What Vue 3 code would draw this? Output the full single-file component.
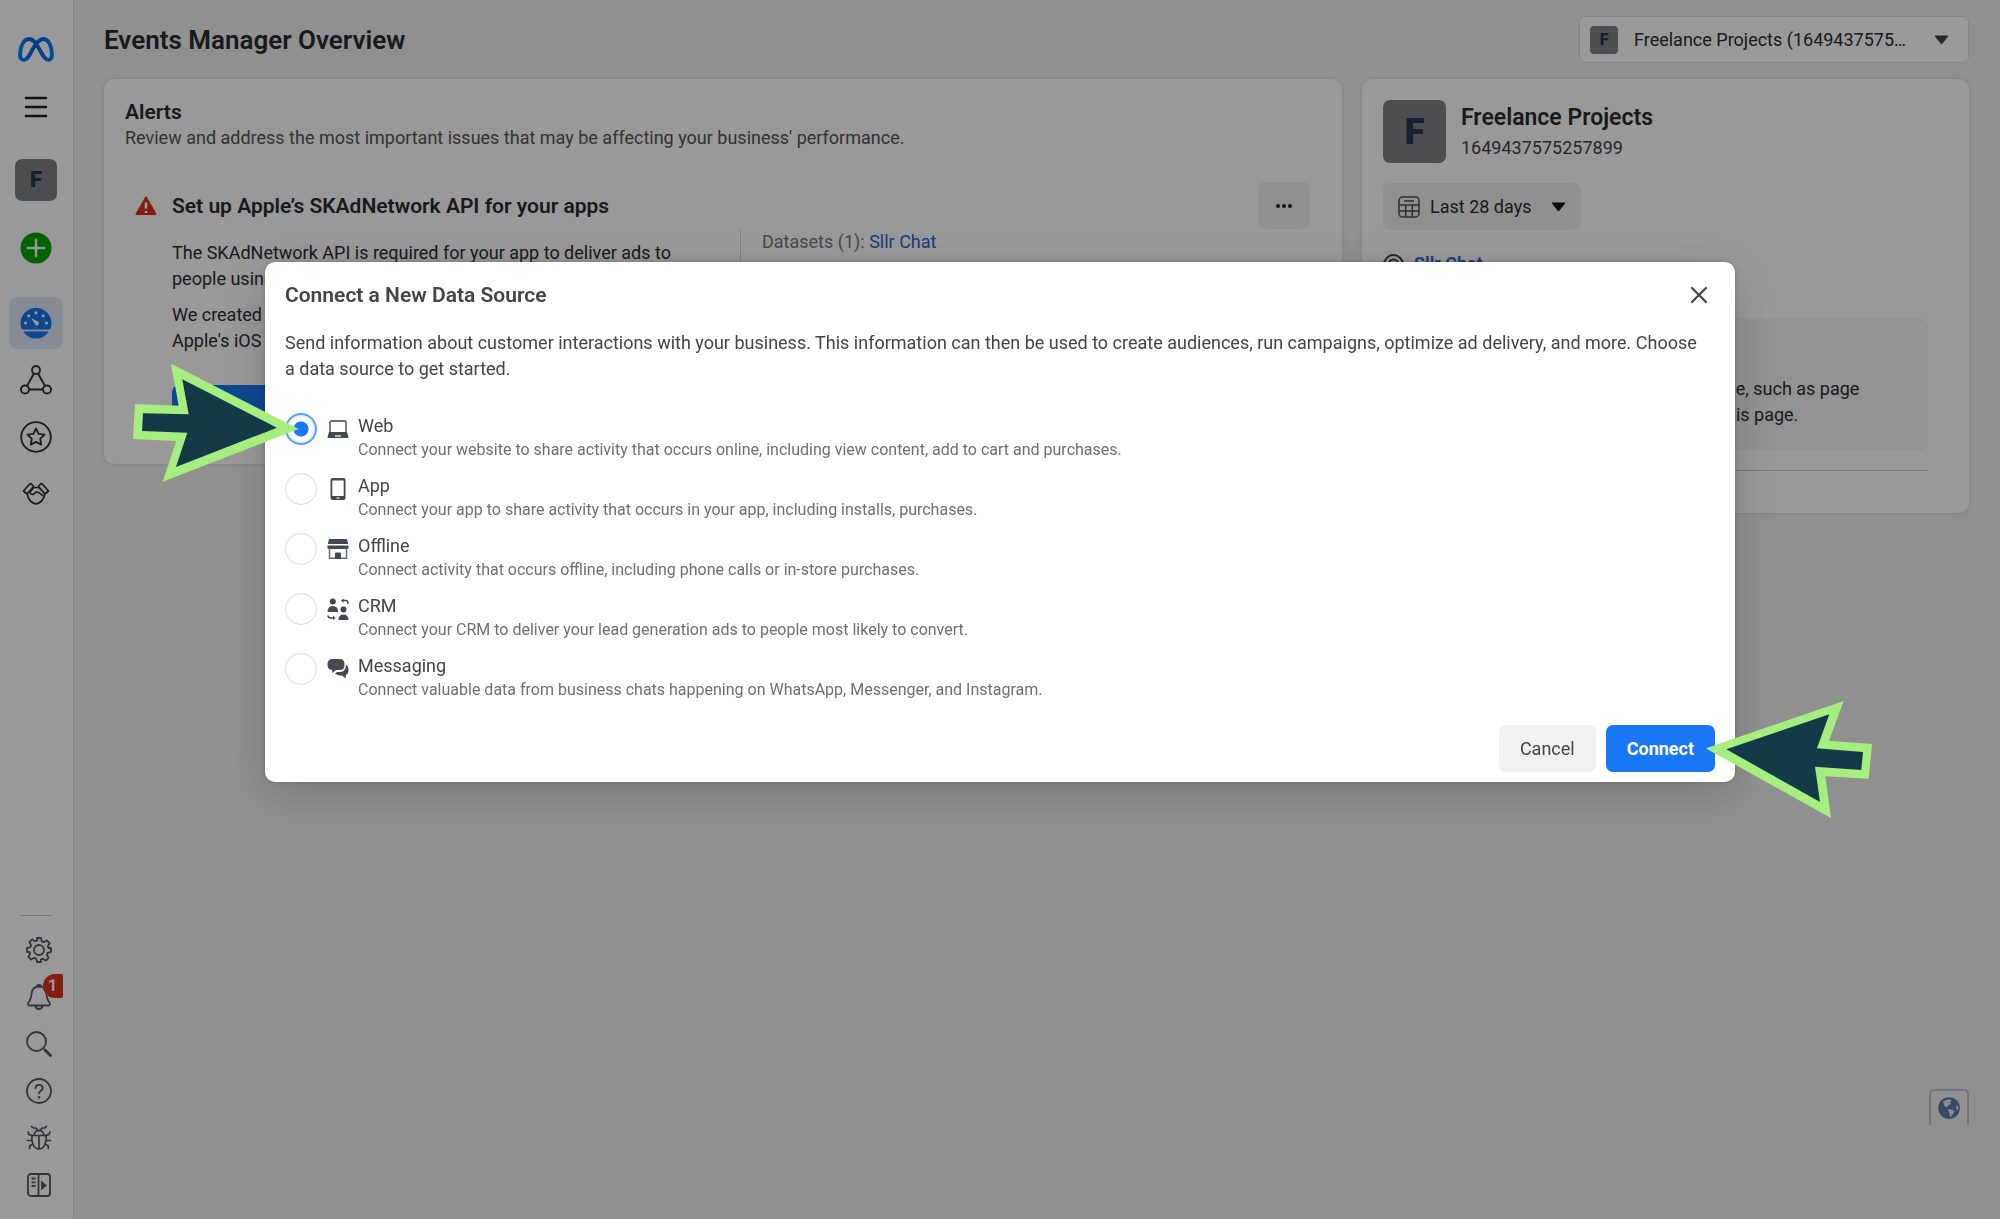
<script setup>
import { ref } from "vue";

const account = ref("1649437575257899");
const dateRange = ref("28");
const selected = ref("web");

const sources = [
  {
    id: "web",
    label: "Web",
    text: "Connect your website to share activity that occurs online, including view content, add to cart and purchases.",
  },
  {
    id: "app",
    label: "App",
    text: "Connect your app to share activity that occurs in your app, including installs, purchases.",
  },
  {
    id: "offline",
    label: "Offline",
    text: "Connect activity that occurs offline, including phone calls or in-store purchases.",
  },
  {
    id: "crm",
    label: "CRM",
    text: "Connect your CRM to deliver your lead generation ads to people most likely to convert.",
  },
  {
    id: "messaging",
    label: "Messaging",
    text: "Connect valuable data from business chats happening on WhatsApp, Messenger, and Instagram.",
  },
];
</script>

<template>
  <div class="page">
    <nav class="sidebar" aria-label="Main">
      <div class="side-top">
        <a href="#" class="logo" aria-label="Meta">
          <svg width="36" height="25" viewBox="0 0 36 25" fill="none">
            <defs>
              <linearGradient id="meta" x1="0" x2="1" y1="0" y2="0">
                <stop offset="0" stop-color="#0082fb" />
                <stop offset="0.45" stop-color="#0064e0" />
                <stop offset="1" stop-color="#0082fb" />
              </linearGradient>
            </defs>
            <path
              d="M2 18C2 10 5.500 2 10.800 2c4.500 0 7 4 10.700 10.500C25 18.700 27 22.800 30.200 22.800c2.600 0 3.800-2 3.800-5.300C34 9.500 30.500 2 25.300 2c-4 0-7 3.800-10.500 10C11 19 9.500 22.800 6 22.800 3.300 22.800 2 20.800 2 18z"
              stroke="url(#meta)"
              stroke-width="3.800"
            />
          </svg>
        </a>
        <button class="icon-btn menu" aria-label="Menu">
          <svg width="24" height="24" viewBox="0 0 24 24" stroke="#1c1e21" stroke-width="2.600" stroke-linecap="round">
            <path d="M2 3h20M2 12h20M2 21h20" />
          </svg>
        </button>
        <button class="avatar avatar-side">F</button>
        <button class="icon-btn plus" aria-label="Create">
          <svg width="32" height="32" viewBox="0 0 32 32">
            <circle cx="16" cy="16" r="15.500" fill="#00a400" />
            <path d="M16 8v16M8 16h16" stroke="#fff" stroke-width="2.400" stroke-linecap="round" />
          </svg>
        </button>
        <a href="#" class="side-link active" aria-label="Overview">
          <svg width="32" height="32" viewBox="0 0 32 32">
            <path d="M1.800 22.500a15.500 15.500 0 1 1 28.400 0z" fill="#1877f2" />
            <path d="M3 24.500h26a15.500 15.500 0 0 1-26 0z" fill="#1877f2" />
            <g fill="#fff">
              <circle cx="5.500" cy="16" r="1.600" />
              <circle cx="8.800" cy="8.800" r="1.600" />
              <circle cx="16" cy="5.800" r="1.600" />
              <circle cx="23.200" cy="8.800" r="1.600" />
              <circle cx="26.500" cy="16" r="1.600" />
              <path d="M11.300 11.300l7 3.500a2.200 2.200 0 0 1-2.700 3.400z" />
            </g>
          </svg>
        </a>
        <a href="#" class="side-link" aria-label="Data sources">
          <svg width="32" height="32" viewBox="0 0 32 32" fill="none" stroke="#2b2d31" stroke-width="1.800">
            <circle cx="16" cy="6" r="4" />
            <circle cx="5" cy="25.500" r="4" />
            <circle cx="27" cy="25.500" r="4" />
            <path d="M14 9.500L7 22M18 9.500L25 22M9 25.500h14" />
          </svg>
        </a>
        <a href="#" class="side-link" aria-label="Custom conversions">
          <svg width="32" height="32" viewBox="0 0 32 32" fill="none" stroke="#2b2d31" stroke-width="1.800" stroke-linejoin="round">
            <circle cx="16" cy="16" r="14.800" />
            <path d="M16 7.500l2.600 5.300 5.900.9-4.300 4.100 1 5.800-5.200-2.700-5.200 2.700 1-5.800-4.300-4.100 5.900-.9z" />
          </svg>
        </a>
        <a href="#" class="side-link" aria-label="Partner integrations">
          <svg width="28" height="24" viewBox="0 0 28 24" fill="none" stroke="#2b2d31" stroke-width="1.700" stroke-linejoin="round" stroke-linecap="round">
            <path d="M1.500 9L7.500 2.200q1-1 2 0l1.500 1.500q.8.800 0 1.700L5 12z" />
            <path d="M26.500 9l-6-6.800q-1-1-2 0L17 3.700q-.8.800 0 1.700L23 12z" />
            <path d="M11.500 5.500h5M5.500 12.500c.3 4 4 9.300 8.500 9.300s8.200-5.300 8.500-9.300" />
            <path d="M11 6.500c-2 1.500-3.500 3.500-2.500 5 1.500 2 4 .5 5.500-1.500 2.500 0 4.500 1 6.500 3.500" />
          </svg>
        </a>
      </div>

      <div class="side-bottom">
        <button class="icon-btn" aria-label="Settings">
          <svg width="26" height="26" viewBox="0 0 26 26" fill="none" stroke="#54585f" stroke-width="1.800" stroke-linejoin="round">
            <circle cx="13" cy="13" r="5" />
            <path d="M11 1h4l.8 3.400 2 .8 3-1.800 2.800 2.800-1.800 3 .8 2L25 11v4l-3.400.8-.8 2 1.800 3-2.800 2.800-3-1.800-2 .8L15 25h-4l-.8-3.400-2-.8-3 1.800-2.800-2.800 1.800-3-.8-2L1 15v-4l3.400-.8.8-2-1.800-3 2.800-2.800 3 1.800 2-.8z" />
          </svg>
        </button>
        <button class="icon-btn bell" aria-label="Notifications">
          <svg width="26" height="26" viewBox="0 0 26 26" fill="none" stroke="#54585f" stroke-width="1.800" stroke-linejoin="round">
            <path d="M13 2.500c-4.600 0-7 3-7.400 7-.4 4.500-1 6.500-3.100 9-1 1.500-.3 3 1.200 3h18.600c1.500 0 2.200-1.500 1.200-3-2.100-2.500-2.700-4.500-3.100-9-.4-4-2.800-7-7.400-7zM9.500 22c.3 2 1.800 3 3.500 3s3.200-1 3.500-3M10.500 2.500c1-2 4-2 5 0" />
          </svg>
          <span class="badge">1</span>
        </button>
        <button class="icon-btn" aria-label="Search">
          <svg width="26" height="26" viewBox="0 0 26 26" fill="none" stroke="#54585f" stroke-linecap="round">
            <circle cx="10.500" cy="10.500" r="9.500" stroke-width="1.800" />
            <path d="M17.500 17.500l2 2" stroke-width="1.800" />
            <path d="M19.500 19.500l5 5" stroke-width="2.800" />
          </svg>
        </button>
        <button class="icon-btn" aria-label="Help">
          <svg width="26" height="26" viewBox="0 0 26 26" fill="none" stroke="#54585f" stroke-width="1.800" stroke-linecap="round">
            <circle cx="13" cy="13" r="12" />
            <path d="M9.500 10.300c0-4.600 7.200-4.400 7.200-.3 0 2.700-3.700 2.600-3.700 5.300" />
            <circle cx="13" cy="19.300" r=".5" />
          </svg>
        </button>
        <button class="icon-btn" aria-label="Report a problem">
          <svg width="26" height="26" viewBox="0 0 26 26" fill="none" stroke="#54585f" stroke-width="1.700" stroke-linecap="round">
            <path d="M6 10.500h14c1 6-1.500 13.500-7 13.500S5 16.500 6 10.500zM8 10.500C8.500 3.800 17.500 3.800 18 10.500M13 10.500V24" />
            <path d="M5.500 1.500l2 1.500h2.500l2 2.500M20.500 1.500l-2 1.500H16l-2 2.500M2 7l1 2.500 3 1M24 7l-1 2.500-3 1M1.500 15.500h4M24.500 15.500h-4M3.500 23.500l.5-3 2.500-1M22.500 23.500l-.5-3-2.500-1" />
          </svg>
        </button>
        <button class="icon-btn" aria-label="Expand navigation">
          <svg width="26" height="26" viewBox="0 0 26 26" fill="none" stroke="#54585f" stroke-width="1.800">
            <rect x="2" y="2" width="22" height="22" rx="3" />
            <path d="M12.500 2v22M5.500 6.500h4M5.500 10.300h4M5.500 14h4" />
            <path d="M16 10.500l3.500 3-3.500 3z" fill="#54585f" />
          </svg>
        </button>
      </div>
    </nav>

    <main class="main">
      <header class="topbar">
        <h1>Events Manager Overview</h1>
        <label class="account-select">
          <span class="avatar avatar-small" aria-hidden="true">F</span>
          <select v-model="account" aria-label="Business account">
            <option value="1649437575257899">Freelance Projects (1649437575257899)</option>
          </select>
          <svg class="caret" width="15" height="10" viewBox="0 0 15 10">
            <path d="M1 1h13L7.500 9z" fill="#444" stroke="#444" stroke-linejoin="round" />
          </svg>
        </label>
      </header>

      <div class="columns">
        <section class="card alerts">
          <h2>Alerts</h2>
          <p class="sub">Review and address the most important issues that may be affecting your business' performance.</p>
          <div class="alert-head">
            <svg width="22" height="20" viewBox="0 0 22 20">
              <path d="M11 1.500L20.500 18h-19z" fill="#d8321a" stroke="#d8321a" stroke-width="2" stroke-linejoin="round" />
              <path d="M11 6.500v6M11 15v2" stroke="#fff" stroke-width="2.600" />
            </svg>
            <h3>Set up Apple’s SKAdNetwork API for your apps</h3>
            <button class="more" aria-label="More options">
              <svg width="18" height="6" viewBox="0 0 18 6" fill="#222">
                <circle cx="3" cy="3" r="2" />
                <circle cx="9" cy="3" r="2" />
                <circle cx="15" cy="3" r="2" />
              </svg>
            </button>
          </div>
          <div class="alert-body">
            <div class="alert-text">
              <p>The SKAdNetwork API is required for your app to deliver ads to people using devices on iOS 14 or later.</p>
              <p>We created a configuration for you based on<br />Apple's iOS 14 requirements.</p>
              <button class="primary">Get Started</button>
            </div>
            <div class="datasets">Datasets (1): <a href="#">Sllr Chat</a></div>
          </div>
        </section>

        <section class="card account">
          <div class="account-head">
            <span class="avatar avatar-large" aria-hidden="true">F</span>
            <div>
              <h2>Freelance Projects</h2>
              <p>1649437575257899</p>
            </div>
          </div>
          <label class="range-select">
            <svg width="22" height="22" viewBox="0 0 22 22" fill="none" stroke="#4a4f57" stroke-width="1.500">
              <rect x="1" y="1" width="20" height="20" rx="3.500" />
              <path d="M6 5h10M1 9h20M1 15h20M7.700 9v12M14.300 9v12" />
            </svg>
            <select v-model="dateRange" aria-label="Date range">
              <option value="28">Last 28 days</option>
            </select>
            <svg class="caret" width="15" height="10" viewBox="0 0 15 10">
              <path d="M1 1h13L7.500 9z" fill="#111" stroke="#111" stroke-linejoin="round" />
            </svg>
          </label>
          <div class="source-name">
            <svg width="21" height="21" viewBox="0 0 21 21" fill="none" stroke="#3a3f47" stroke-width="2">
              <circle cx="10.500" cy="10.500" r="9.400" />
              <circle cx="10.500" cy="10.500" r="5" />
            </svg>
            <a href="#">Sllr Chat</a>
          </div>
          <div class="notice">
            <p>website, such as page<br />visit this page.</p>
          </div>
          <hr />
        </section>
      </div>

      <button class="globe" aria-label="Language">
        <svg width="22" height="22" viewBox="0 0 22 22">
          <circle cx="11" cy="11" r="10.800" fill="#5f78b0" />
          <path d="M5 4.500l4-2 5 .5-2 2 1 2-2.500 1L9 10.500 6.500 9zM10 12l4 .5 2.500 2-2 3-2.500 3-.5-4zM19 8l1.500 2-1 3.500-1.500-2z" fill="#e4e8ee" />
        </svg>
      </button>
    </main>

    <div class="overlay">
      <div class="modal" role="dialog" aria-modal="true" aria-labelledby="modal-title">
        <div class="modal-head">
          <h2 id="modal-title">Connect a New Data Source</h2>
          <button class="close" aria-label="Close">
            <svg width="18" height="18" viewBox="0 0 18 18" stroke="#444" stroke-width="2.200" stroke-linecap="round">
              <path d="M2 2l14 14M16 2L2 16" />
            </svg>
          </button>
        </div>
        <p class="intro">
          Send information about customer interactions with your business. This information can then be used to create
          audiences, run campaigns, optimize ad delivery, and more. Choose a&nbsp;data source to get started.
        </p>

        <div class="options" role="radiogroup" aria-labelledby="modal-title">
          <label v-for="source in sources" :key="source.id" class="option">
            <input v-model="selected" type="radio" name="source" :value="source.id" />
            <svg class="source-icon" width="22" height="22" viewBox="0 0 22 22" fill="#444950">
              <template v-if="source.id === 'web'">
                <path d="M3 14V4.500A1.500 1.500 0 0 1 4.500 3h13A1.500 1.500 0 0 1 19 4.500V14" fill="none" stroke="#6a6e76" stroke-width="1.800" />
                <path d="M2 14h18l1.500 5q0 1-1 1h-19q-1 0-1-1z" />
                <path d="M8 18h6" stroke="#fff" stroke-width="1.200" />
              </template>
              <template v-else-if="source.id === 'app'">
                <path d="M5.500 0h11a2 2 0 0 1 2 2v18a2 2 0 0 1-2 2h-11a2 2 0 0 1-2-2V2a2 2 0 0 1 2-2z" />
                <path d="M5.300 2.500h11.400v15.500H5.300z" fill="#fff" />
                <path d="M9.500 20h3" stroke="#fff" stroke-width="1" />
              </template>
              <template v-else-if="source.id === 'offline'">
                <path d="M3 1h16q1 0 1.200 1l1 4H.8l1-4Q2 1 3 1zM.5 7.500h21V10q0 1-1.200 1H1.700Q.5 11 .5 10z" />
                <path d="M2.500 10v10.300h17V10" fill="none" stroke="#6a6e76" stroke-width="1.500" />
                <path d="M8 21v-5.500q0-1 1-1h4q1 0 1 1V21z" />
              </template>
              <template v-else-if="source.id === 'crm'">
                <circle cx="5.800" cy="3.600" r="3" />
                <path d="M.5 14q0-6 5.300-6t5.300 6zM11.500 22q0-5.500 5-5.500t5 5.500z" />
                <circle cx="16.500" cy="11.500" r="3" />
                <path d="M15 2.500h4q2 0 2 3.500M1 17.500q0 2.500 3 2.500h3" fill="none" stroke="#444950" stroke-width="1.500" />
                <path d="M16.500.5v4.500L14 2.500zM6 17.500V22l2.500-2z" />
              </template>
              <template v-else>
                <path d="M5 1h8q4.500 0 4.500 5.500T13 12H9l-3.500 3-.5-3Q.5 11.500.5 6.500T5 1z" />
                <path d="M19 7q2.500 1 2.500 5t-2.500 5l-.5 3.500L15 17.500q-4.500.5-7-2l2-1.500h3q5.500 0 6-7z" />
              </template>
            </svg>
            <span class="option-text">
              <span class="option-label">{{ source.label }}</span>
              <span class="option-desc">{{ source.text }}</span>
            </span>
            <svg v-if="source.id === 'web'" class="arrow arrow-left" width="166" height="118" viewBox="133 364 166 118">
              <path d="M298.700 429L171 363.700l7.700 42L135 404l-2 35 43.300 2-13.600 40.700z" fill="#a5ee7f" />
              <path d="M277 427.700l-94.700-48.400 6.400 35-45.700-1-1 17.700 45.300 1.700L176 467z" fill="#143a48" />
            </svg>
          </label>
        </div>

        <div class="modal-foot">
          <button class="cancel">Cancel</button>
          <button class="connect">
            Connect
            <svg class="arrow arrow-right" width="166" height="117" viewBox="1706 701 166 117">
              <path d="M1705.700 748.300L1843.700 701 1829 740.700l43 3.300-3.300 34.700-43.400-2.400 5.700 41.700z" fill="#a5ee7f" />
              <path d="M1726.300 749.300l103-35-12.300 34 46 3.700-1.700 18-46.300-3.300 5 35.300z" fill="#143a48" />
            </svg>
          </button>
        </div>
      </div>
    </div>
  </div>
</template>

<style>
body {
  margin: 0;
}
</style>

<style scoped>
.page {
  display: flex;
  min-height: 100vh;
  background: #f1f1f1;
  color: #2a2c30;
  font-family: Roboto, "Liberation Sans", sans-serif;
  font-size: 18px;
  line-height: 26px;
}

.page *,
.page {
  box-sizing: border-box;
}

h1,
h2,
h3,
p {
  margin: 0;
}

h1,
h2,
h3 {
  font-weight: 600;
}

button,
select {
  font: inherit;
  color: inherit;
}

button {
  padding: 0;
  border: none;
  background: none;
  cursor: pointer;
}

svg {
  display: block;
  flex: none;
}

a {
  color: #2f62cf;
  text-decoration: none;
}

/* sidebar */
.sidebar {
  display: flex;
  flex-direction: column;
  justify-content: space-between;
  flex: none;
  width: 74px;
  padding: 37px 1px 21px 0;
  background: #fff;
  border-right: 1px solid #e0e0e0;
}

.side-top {
  display: flex;
  flex-direction: column;
  align-items: center;
}

.menu {
  margin-top: 33px;
}

.avatar {
  display: flex;
  align-items: center;
  justify-content: center;
  flex: none;
  background: #808386;
  color: #28344c;
  font-weight: 900;
}

.avatar-side {
  width: 42px;
  height: 42px;
  margin: 40px 0 31px;
  border-radius: 7px;
  font-size: 22px;
}

.plus {
  margin-bottom: 33px;
}

.side-link {
  display: flex;
  align-items: center;
  justify-content: center;
  width: 52px;
  height: 52px;
  margin-bottom: 5px;
  border-radius: 6px;
}

.active {
  background: #e1eaf7;
}

.side-bottom {
  display: flex;
  flex-direction: column;
  align-items: center;
  gap: 21px;
  margin: 0 20px;
  padding-top: 21px;
  border-top: 1px solid #ccc;
}

.side-bottom .icon-btn {
  position: relative;
  margin-left: 5px;
}

.badge {
  position: absolute;
  top: -10px;
  left: 17px;
  width: 20px;
  height: 24px;
  border-radius: 12px 2px 2px 12px;
  background: #d8321a;
  color: #fff;
  font-size: 16px;
  font-weight: 700;
  line-height: 24px;
}

/* content */
.main {
  display: flex;
  flex-direction: column;
  flex: 1;
  min-width: 0;
  padding: 16px 31px 94px 30px;
}

.topbar {
  display: flex;
  align-items: center;
  justify-content: space-between;
  margin-bottom: 16px;
}

h1 {
  font-size: 26px;
}

.account-select {
  display: flex;
  align-items: center;
  width: 390px;
  height: 47px;
  padding: 0 19px 0 10px;
  border: 1px solid #ddd;
  border-radius: 6px;
  background: #fff;
}

select {
  appearance: none;
  border: none;
  background: transparent;
  padding: 0;
  text-overflow: ellipsis;
}

.account-select select {
  flex: 1;
  min-width: 0;
  margin: 0 25px 0 16px;
}

.avatar-small {
  width: 28px;
  height: 28px;
  border-radius: 4px;
  font-size: 16px;
}

.columns {
  display: flex;
  align-items: flex-start;
  gap: 20px;
}

.card {
  border-radius: 10px;
  background: #fff;
  box-shadow: 0 0 4px rgba(0, 0, 0, 0.16);
}

.alerts {
  flex: 1;
  min-width: 0;
  padding: 20px 32px 32px 21px;
}

.alerts h2,
.alerts h3 {
  font-size: 21px;
}

.sub {
  color: #555;
}

.alert-head {
  display: flex;
  align-items: center;
  margin-top: 31px;
  padding-left: 10px;
}

.alert-head h3 {
  flex: 1;
  margin-left: 15px;
}

.more {
  display: flex;
  align-items: center;
  justify-content: center;
  width: 52px;
  height: 47px;
  border-radius: 7px;
  background: #f1f1f1;
}

.alert-body {
  display: flex;
  align-items: stretch;
  padding-left: 47px;
}

.alert-text {
  width: 568px;
  padding: 11px 50px 0 0;
}

.alert-text p {
  margin-bottom: 10px;
}

.primary {
  width: 300px;
  height: 47px;
  margin-top: 21px;
  border-radius: 7px;
  background: #1877f2;
  color: #fff;
  font-weight: 600;
}

.datasets {
  padding: 0 21px;
  border-left: 1px solid #d5d5d5;
  color: #75777b;
}

.account {
  width: 607px;
  padding: 21px 41px 42px 21px;
}

.account-head {
  display: flex;
  gap: 15px;
}

.account-head h2 {
  margin-top: 5px;
  font-size: 23px;
}

.account-head p {
  margin-top: 4px;
  color: #444;
}

.avatar-large {
  width: 63px;
  height: 63px;
  border-radius: 7px;
  font-size: 36px;
}

.range-select {
  display: inline-flex;
  align-items: center;
  height: 47px;
  margin-top: 20px;
  padding: 0 15px;
  border-radius: 7px;
  background: #f1f1f1;
}

.range-select select {
  width: 103px;
  margin: 0 18px 0 10px;
}

.source-name {
  display: flex;
  align-items: center;
  gap: 10px;
  margin-top: 21px;
  font-weight: 600;
}

.notice {
  margin-top: 42px;
  padding: 57px 20px 22px 300px;
  border-radius: 7px;
  background: #f5f5f5;
}

hr {
  margin: 20px 0 0;
  border: none;
  border-top: 1px solid #ccc;
}

.globe {
  display: flex;
  align-items: center;
  justify-content: center;
  align-self: flex-end;
  width: 40px;
  height: 36px;
  margin-top: auto;
  border: 2px solid #c0c2d4;
  border-bottom: none;
  border-radius: 5px 5px 0 0;
  background: #f0f2f1;
}

/* dialog */
.overlay {
  display: flex;
  align-items: flex-start;
  justify-content: center;
  position: fixed;
  inset: 0;
  padding: 262px 265px 0;
  background: rgba(0, 0, 0, 0.4);
}

.modal {
  flex: 1;
  padding: 20px 20px 10px;
  border-radius: 10px;
  background: #fff;
  color: #444;
  box-shadow: 0 12px 48px rgba(0, 0, 0, 0.18), 0 0 4px rgba(0, 0, 0, 0.2);
}

.modal-head {
  display: flex;
  align-items: center;
  justify-content: space-between;
}

.modal-head h2 {
  font-size: 21px;
}

.close {
  padding: 0 7px;
}

.intro {
  margin-top: 22px;
}

.options {
  display: flex;
  flex-direction: column;
  gap: 12px;
  margin-top: 31px;
}

.option {
  display: flex;
  align-items: flex-start;
  position: relative;
  cursor: pointer;
}

.option input {
  appearance: none;
  flex: none;
  width: 32px;
  height: 32px;
  margin: 0 10px 0 0;
  border: 1px solid #dadada;
  border-radius: 50%;
  background: #fff;
}

.option input:checked {
  border: 2px solid #5c9ff6;
  background: radial-gradient(circle, #1877f2 7px, #fff 8px, #fff 11px, #dde9fb 14px);
}

.source-icon {
  margin-top: 5px;
}

.option-text {
  margin-left: 9px;
}

.option-label,
.option-desc {
  display: block;
}

.option-desc {
  color: #6d6f73;
  font-size: 16px;
  line-height: 22px;
}

.modal-foot {
  display: flex;
  justify-content: flex-end;
  gap: 10px;
  margin-top: 24px;
}

.cancel,
.connect {
  height: 47px;
  padding: 0 21px;
  border-radius: 7px;
  background: #f1f1f1;
}

.connect {
  position: relative;
  background: #1877f2;
  color: #fff;
  font-weight: 700;
}

.arrow {
  position: absolute;
  pointer-events: none;
}

.arrow-left {
  top: -49px;
  right: calc(100% - 14px);
}

.arrow-right {
  top: -24px;
  left: calc(100% - 9px);
}
</style>
